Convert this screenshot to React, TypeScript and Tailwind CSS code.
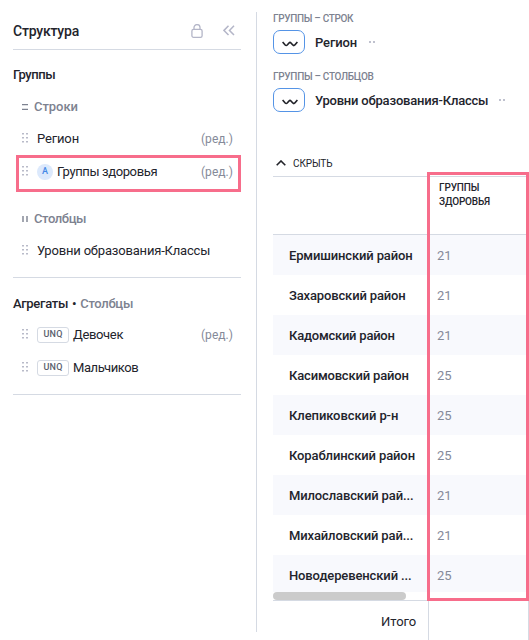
import { clsx } from "clsx";

const rows = [
  { name: "Ермишинский район", value: 21, tracking: "tracking-[-0.14px]" },
  { name: "Захаровский район", value: 21, tracking: "tracking-[-0.15px]" },
  { name: "Кадомский район", value: 21, tracking: "tracking-[-0.23px]" },
  { name: "Касимовский район", value: 25, tracking: "tracking-[-0.18px]" },
  { name: "Клепиковский р-н", value: 25, tracking: "tracking-[-0.08px]" },
  { name: "Кораблинский район", value: 25, tracking: "tracking-[-0.12px]" },
  { name: "Милославский рай...", value: 21, tracking: "tracking-[-0.13px]" },
  { name: "Михайловский рай...", value: 21, tracking: "tracking-[-0.13px]" },
  { name: "Новодеревенский ...", value: 25, tracking: "tracking-[-0.12px]" },
];

function LockIcon() {
  return (
    <svg width="12" height="14" viewBox="0 0 12 14" fill="none" stroke="#b4b6c8" strokeWidth="1.3">
      <rect x="0.9" y="5.4" width="10.2" height="7.9" rx="1.6" />
      <path d="M3 5.4V3.6a3 3 0 0 1 6 0v1.8" />
    </svg>
  );
}

function CollapseIcon() {
  return (
    <svg width="12" height="11" viewBox="0 0 12 11" fill="none" stroke="#b4b6c8" strokeWidth="1.5">
      <path d="M5.5 0.8 1 5.4l4.5 4.6M11 0.8 6.5 5.4 11 10" />
    </svg>
  );
}

function DragHandle() {
  return (
    <svg width="6" height="10" viewBox="0 0 6 10" fill="#b9bbc9" className="mr-[9px] mb-[2px] shrink-0">
      <path d="M0 0h2v1.6H0zM4 0h2v1.6H4zM0 4h2v1.6H0zM4 4h2v1.6H4zM0 8h2v1.6H0zM4 8h2v1.6H4z" />
    </svg>
  );
}

function Edit() {
  return <span className="mr-[8px] ml-auto text-[12px] tracking-[0.04px] text-[#858a99]">(ред.)</span>;
}

function Unq() {
  return (
    <span className="mr-1 flex h-4 w-8 items-center justify-center rounded-[3px] border border-[#d5dae3] text-[9px] font-medium tracking-[0.2px] text-[#59606d]">
      UNQ
    </span>
  );
}

function Wave() {
  return (
    <span className="mr-[10px] flex h-6 w-8 items-center justify-center rounded-[7px] border border-[#5594e6]">
      <svg width="16" height="6" viewBox="0 0 16 6" fill="none" stroke="#222329" strokeWidth="1.7" className="mt-[3px] ml-[2px]">
        <path d="M0.6 1 3.2 4Q4.2 5 5.2 4L7 2Q8 1 9 2L10.8 4Q11.8 5 12.8 4L15.4 1" />
      </svg>
    </span>
  );
}

function Dots() {
  return (
    <svg width="6" height="2" viewBox="0 0 6 2" fill="#bfc1ce">
      <path d="M0 0h2v2H0zM4 0h2v2H4z" />
    </svg>
  );
}

function Sidebar() {
  return (
    <aside className="mt-3 h-[620px] w-[257px] shrink-0 border-r border-[#d5dae3] pr-[15px] pl-[13px]">
      <div className="flex h-[38px] items-center border-b border-[#d5dae3]">
        <h1 className="pt-px text-[14px] font-medium tracking-[-0.2px]">Структура</h1>
        <span className="mr-[20px] ml-auto">
          <LockIcon />
        </span>
        <span className="mr-[6px]">
          <CollapseIcon />
        </span>
      </div>
      <h2 className="mt-[15px] h-5 text-[13px] leading-5 font-medium tracking-[-0.45px]">Группы</h2>
      <div className="mt-3 flex h-5 items-center pl-[9px] text-[13px] font-medium tracking-[-0.05px] text-[#7d8290]">
        <svg width="6" height="6" viewBox="0 0 6 6" stroke="currentColor" strokeWidth="1.2" className="mr-[6px] mb-px">
          <path d="M0 0.6h6M0 5.4h6" />
        </svg>
        Строки
      </div>
      <div className="mt-[5px] flex h-[33px] items-center pl-[9px] text-[13px]">
        <DragHandle />
        <span className="tracking-[-0.15px]">Регион</span>
        <Edit />
      </div>
      <div className="ml-[3px] flex h-[37px] items-center border-3 border-[#f76d8b] pb-[4px] pl-[3px]">
        <DragHandle />
        <span className="mr-1 flex size-4 items-center justify-center rounded-full bg-[#dce9fc] text-[9px] font-medium text-[#4388e6]">
          A
        </span>
        <span className="text-[13px] tracking-[-0.38px]">Группы здоровья</span>
        <span className="-mr-[3px] ml-auto leading-5">
          <Edit />
        </span>
      </div>
      <div className="mt-[17px] flex h-5 items-center pl-[9px] text-[13px] font-medium tracking-[-0.4px] text-[#7d8290]">
        <svg width="6" height="6" viewBox="0 0 6 6" stroke="currentColor" strokeWidth="1.4" className="mr-[6px] mb-px">
          <path d="M1 0v6M5 0v6" />
        </svg>
        Столбцы
      </div>
      <div className="mt-[5px] flex h-[33px] items-center pl-[9px] text-[13px]">
        <DragHandle />
        <span className="tracking-[-0.18px]">Уровни образования-Классы</span>
      </div>
      <div className="mt-[10px] border-t border-[#d5dae3]" />
      <h2 className="mt-4 h-5 text-[13px] leading-5 font-medium tracking-[-0.3px]">
        Агрегаты <span className="mx-px">•</span> <span className="text-[#7d8290]">Столбцы</span>
      </h2>
      <div className="mt-1 flex h-[33px] items-center pl-[9px] text-[13px]">
        <DragHandle />
        <Unq />
        <span className="tracking-[-0.35px]">Девочек</span>
        <Edit />
      </div>
      <div className="flex h-[33px] items-center pl-[9px] text-[13px]">
        <DragHandle />
        <Unq />
        <span className="tracking-[-0.43px]">Мальчиков</span>
      </div>
      <div className="mt-[10px] border-t border-[#d5dae3]" />
    </aside>
  );
}

export default function App() {
  return (
    <div className="flex h-[640px] w-[529px] overflow-hidden bg-white font-['Roboto',sans-serif] text-[#23242c]">
      <Sidebar />
      <main className="relative ml-4 w-64 shrink-0 pt-3">
        <div className="h-[14px] text-[10px] leading-[14px] font-medium tracking-[-0.32px] text-[#7d8290]">ГРУППЫ – СТРОК</div>
        <div className="mt-1 flex items-center text-[13px] font-medium">
          <Wave />
          <span className="mr-3 pt-px tracking-[-0.15px]">Регион</span>
          <Dots />
        </div>
        <div className="mt-4 h-[14px] text-[10px] leading-[14px] font-medium tracking-[-0.3px] text-[#7d8290]">ГРУППЫ – СТОЛБЦОВ</div>
        <div className="mt-1 flex items-center text-[13px] font-medium">
          <Wave />
          <span className="mr-[11px] pt-px tracking-[-0.2px]">Уровни образования-Классы</span>
          <Dots />
        </div>
        <div className="mt-[38px] flex h-[26px] items-center pl-[3px] text-[10px] tracking-[-0.1px]">
          <svg width="10" height="6" viewBox="0 0 10 6" fill="none" stroke="#222329" strokeWidth="1.6" className="mr-[7px]">
            <path d="M0.7 5.3 5 1l4.3 4.3" />
          </svg>
          СКРЫТЬ
        </div>
        <div className="flex h-[59px] border-y border-[#d5dae3]">
          <div className="w-[166px]" />
          <div className="pt-1 text-[10px] leading-[14px] font-medium tracking-[-0.15px]">
            ГРУППЫ
            <br />
            ЗДОРОВЬЯ
          </div>
        </div>
        <div className="h-[357px] overflow-hidden">
          {rows.map((row, i) => (
            <div key={row.name} className={clsx("flex h-10 items-center pt-px pl-4 text-[13px]", i % 2 === 0 && "bg-[#f8f9fd]")}>
              <span className={clsx("w-[148px] font-medium whitespace-nowrap", row.tracking)}>{row.name}</span>
              <span className="text-[#858a99]">{row.value}</span>
            </div>
          ))}
        </div>
        <div className="h-[9px] border-b border-[#d5dae3]">
          <div className="h-2 w-[133px] rounded-full bg-[#cbcbcb]" />
        </div>
        <div className="flex h-10">
          <div className="w-[156px] border-r border-[#d5dae3] pt-[11px] pr-3 text-right text-[13px] leading-5 tracking-[-0.1px]">Итого</div>
          <div className="w-[100px] border-r border-[#d5dae3]" />
        </div>
        {/* highlighted column frame */}
        <div className="absolute top-[172px] left-[154px] h-[429px] w-[102px] border-3 border-[#f76d8b]" />
      </main>
    </div>
  );
}
